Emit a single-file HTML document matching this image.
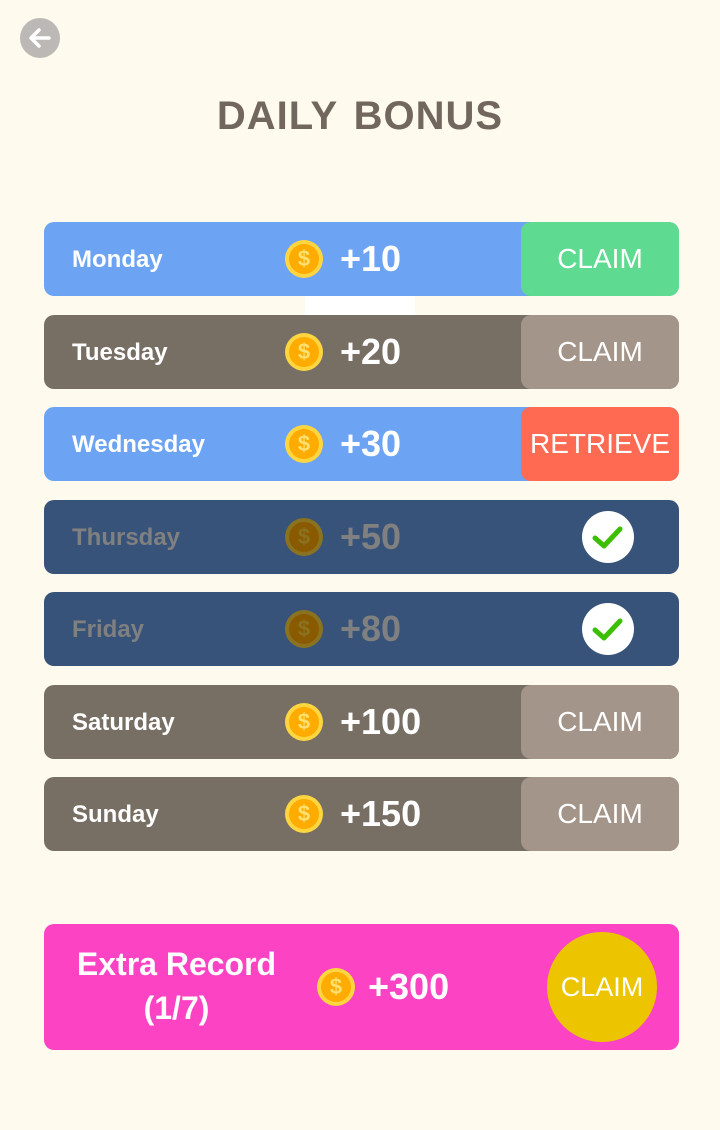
<!DOCTYPE html>
<html><head><meta charset="utf-8"><style>
*{margin:0;padding:0;box-sizing:border-box}
body{width:720px;height:1130px;background:#fefaee;position:relative;font-family:"Liberation Sans",sans-serif;overflow:hidden}
.abs{position:absolute}
.row{position:absolute;left:44px;width:635px;height:74px;border-radius:10px;overflow:hidden}
.day{position:absolute;left:28px;top:1px;line-height:74px;font-size:24px;font-weight:bold;color:#fff}
.coin{position:absolute;left:241px;top:18px;width:38px;height:38px;border-radius:50%;background:#ffd640;}
.coin i{position:absolute;left:4px;top:4px;width:30px;height:30px;border-radius:50%;background:#ffab00;color:#ffe070;font-style:normal;font-weight:bold;font-size:22px;text-align:center;line-height:30px}
.amt{position:absolute;left:296px;top:0;line-height:74px;font-size:36px;font-weight:bold;color:#fff}
.btn{position:absolute;right:0;top:0;width:158px;height:74px;border-radius:10px;color:#fff;font-size:28px;text-align:center;line-height:74px}
.chk{position:absolute;left:538px;top:11px;width:52px;height:52px;border-radius:50%;background:#fff}
.dim .day,.dim .amt{color:#808080}
.dim .coin{background:#8a7320}.dim .coin i{background:#8a5a00;color:#8a7320}
</style></head><body>
<div class="abs" style="left:20px;top:18px;width:40px;height:40px;border-radius:50%;background:#bbb8b6">
<svg width="40" height="40" viewBox="0 0 40 40"><path d="M29 20H12M19 12l-8 8 8 8" stroke="#fff" stroke-width="3.5" fill="none" stroke-linecap="round" stroke-linejoin="round"/></svg></div>
<div class="abs" style="left:0;width:720px;top:94px;text-align:center;font-size:40px;font-weight:bold;color:#72675f;letter-spacing:1px;word-spacing:4px">DAILY BONUS</div>
<div class="abs" style="left:305px;top:296px;width:110px;height:19px;background:#fff"></div>

<div class="row" style="top:222px;background:#6ca3f2"><div class="day">Monday</div><div class="coin"><i>$</i></div><div class="amt">+10</div><div class="btn" style="background:#5fda91">CLAIM</div></div>
<div class="row" style="top:315px;background:#776e64"><div class="day">Tuesday</div><div class="coin"><i>$</i></div><div class="amt">+20</div><div class="btn" style="background:#a39589">CLAIM</div></div>
<div class="row" style="top:407px;background:#6ca3f2"><div class="day">Wednesday</div><div class="coin"><i>$</i></div><div class="amt">+30</div><div class="btn" style="background:#ff6a52">RETRIEVE</div></div>
<div class="row dim" style="top:500px;background:#375379"><div class="day">Thursday</div><div class="coin"><i>$</i></div><div class="amt">+50</div><div class="chk"><svg width="52" height="52"><path d="M13 27l9 8 16-17" stroke="#3cbf00" stroke-width="5" fill="none" stroke-linecap="round" stroke-linejoin="round"/></svg></div></div>
<div class="row dim" style="top:592px;background:#375379"><div class="day">Friday</div><div class="coin"><i>$</i></div><div class="amt">+80</div><div class="chk"><svg width="52" height="52"><path d="M13 27l9 8 16-17" stroke="#3cbf00" stroke-width="5" fill="none" stroke-linecap="round" stroke-linejoin="round"/></svg></div></div>
<div class="row" style="top:685px;background:#776e64"><div class="day">Saturday</div><div class="coin"><i>$</i></div><div class="amt">+100</div><div class="btn" style="background:#a39589">CLAIM</div></div>
<div class="row" style="top:777px;background:#776e64"><div class="day">Sunday</div><div class="coin"><i>$</i></div><div class="amt">+150</div><div class="btn" style="background:#a39589">CLAIM</div></div>

<div class="abs" style="left:44px;top:924px;width:635px;height:126px;border-radius:10px;background:#fb43c4">
<div class="abs" style="left:20px;top:18px;width:225px;text-align:center;font-size:32px;font-weight:bold;color:#fff;line-height:44px">Extra Record<br>(1/7)</div>
<div class="coin" style="left:273px;top:44px"><i>$</i></div>
<div class="abs" style="left:324px;top:42px;font-size:36px;font-weight:bold;color:#fff">+300</div>
<div class="abs" style="left:503px;top:8px;width:110px;height:110px;border-radius:50%;background:#ecc500;color:#fff;font-size:27px;text-align:center;line-height:110px">CLAIM</div>
</div>
</body></html>
